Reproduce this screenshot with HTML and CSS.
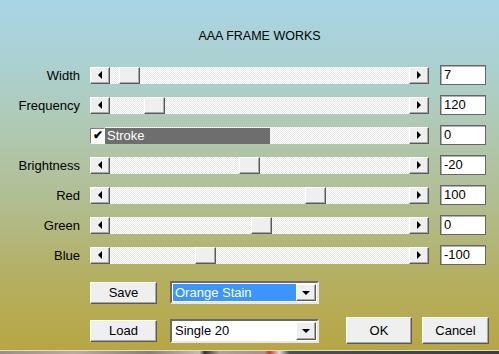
FILE: index.html
```html
<!DOCTYPE html>
<html>
<head>
	<title>AAA Frame Works</title>
	<meta charset="utf-8">
	<link rel="stylesheet" href="styles.css">
</head>
<body>
	<div class="dialog">
		<div class="title">AAA FRAME WORKS</div>

		<div class="rows">
			<div class="label">Width</div>
			<div class="scroll">
				<div class="btn arrow"><span class="tri-left"></span></div>
				<div class="track"><div class="btn thumb" style="left:9px"></div></div>
				<div class="btn arrow"><span class="tri-right"></span></div>
			</div>
			<div class="value">7</div>

			<div class="label">Frequency</div>
			<div class="scroll">
				<div class="btn arrow"><span class="tri-left"></span></div>
				<div class="track"><div class="btn thumb" style="left:34px"></div></div>
				<div class="btn arrow"><span class="tri-right"></span></div>
			</div>
			<div class="value">120</div>

			<div class="label"></div>
			<div class="scroll">
				<div class="check">&#10004;</div>
				<div class="track stroke-track"><div class="stroke-bar">Stroke</div></div>
				<div class="btn arrow"><span class="tri-right"></span></div>
			</div>
			<div class="value">0</div>

			<div class="label">Brightness</div>
			<div class="scroll">
				<div class="btn arrow"><span class="tri-left"></span></div>
				<div class="track"><div class="btn thumb" style="left:129px"></div></div>
				<div class="btn arrow"><span class="tri-right"></span></div>
			</div>
			<div class="value">-20</div>

			<div class="label">Red</div>
			<div class="scroll">
				<div class="btn arrow"><span class="tri-left"></span></div>
				<div class="track"><div class="btn thumb" style="left:195px"></div></div>
				<div class="btn arrow"><span class="tri-right"></span></div>
			</div>
			<div class="value">100</div>

			<div class="label">Green</div>
			<div class="scroll">
				<div class="btn arrow"><span class="tri-left"></span></div>
				<div class="track"><div class="btn thumb" style="left:141px"></div></div>
				<div class="btn arrow"><span class="tri-right"></span></div>
			</div>
			<div class="value">0</div>

			<div class="label">Blue</div>
			<div class="scroll">
				<div class="btn arrow"><span class="tri-left"></span></div>
				<div class="track"><div class="btn thumb" style="left:85px"></div></div>
				<div class="btn arrow"><span class="tri-right"></span></div>
			</div>
			<div class="value">-100</div>
		</div>

		<div class="bottom">
			<div class="btn push small">Save</div>
			<div class="combo">
				<div class="combo-text selected">Orange Stain</div>
				<div class="btn combo-arrow"><span class="tri-down"></span></div>
			</div>
			<div></div>

			<div class="btn push small">Load</div>
			<div class="combo tall">
				<div class="combo-text">Single 20</div>
				<div class="btn combo-arrow"><span class="tri-down"></span></div>
			</div>
			<div class="actions">
				<div class="btn push ok">OK</div>
				<div class="btn push cancel">Cancel</div>
			</div>
		</div>
	</div>
	<div class="strip"></div>
</body>
</html>
```

FILE: styles.css
```css
*,*::after,*::before{
	box-sizing: border-box;
	margin: 0;
	padding: 0;
}

body{
	width: 499px;
	height: 354px;
	overflow: hidden;
	font-family: 'Liberation Sans', Arial, sans-serif;
	font-size: 13px;
	color: black;
}

.dialog{
	height: 350px;
	background: linear-gradient(to bottom, #a8d5e4 0%, #acd0cf 20%, #b0c8b0 38%, #b1bd90 58%, #b4b064 78%, #b8a644 100%);
	display: flex;
	flex-direction: column;
}

.title{
	padding: 29px 0 0 20px;
	line-height: 15px;
	text-align: center;
	font-size: 12.5px;
}

.rows{
	margin-top: 21px;
	display: grid;
	grid-template-columns: 80px 339px 47px;
	grid-auto-rows: 20px;
	column-gap: 10px;
	row-gap: 10px;
	align-items: center;
}

.label{
	text-align: right;
}

.scroll{
	display: flex;
	height: 17px;
}

.btn{
	background-color: #efefef;
	border: 1px solid;
	border-color: #ffffff #5a5a5a #5a5a5a #ffffff;
	box-shadow: inset -1px -1px 0 #a8a8a8;
}

.arrow{
	width: 20px;
	height: 17px;
	display: flex;
	justify-content: center;
	align-items: center;
}

.tri-left,.tri-right,.tri-down{
	width: 0;
	height: 0;
	border: 4px solid transparent;
}

.tri-left{
	border-left-width: 0;
	border-right-color: black;
}

.tri-right{
	border-right-width: 0;
	border-left-color: black;
}

.tri-down{
	border-bottom-width: 0;
	border-top-color: black;
}

.track{
	flex: 1;
	position: relative;
	background-color: #f6f6f6;
	background-image: repeating-conic-gradient(#ffffff 0 25%, #e6e6e6 0 50%);
	background-size: 2px 2px;
}

.thumb{
	position: absolute;
	top: 0;
	width: 21px;
	height: 17px;
}

.check{
	width: 15px;
	height: 16px;
	margin-top: 1px;
	background-color: white;
	border: 1px solid;
	border-color: #808080 #ffffff #ffffff #808080;
	font-size: 12px;
	font-weight: bold;
	line-height: 13px;
	text-align: center;
}

.stroke-track{
	padding-top: 1px;
}

.stroke-bar{
	width: 165px;
	height: 16px;
	background-color: #6e6e6e;
	color: white;
	padding-left: 2px;
	line-height: 15px;
}

.value{
	height: 20px;
	margin-left: 1px;
	background-color: white;
	border: 1px solid #666666;
	box-shadow: inset 1px 1px 0 #b0b0b0;
	padding-left: 3px;
	line-height: 18px;
}

.bottom{
	margin-top: 16px;
	padding-left: 90px;
	display: grid;
	grid-template-columns: 67px 149px 1fr;
	grid-template-rows: 23px 27px;
	column-gap: 13px;
	row-gap: 13px;
	align-items: center;
}

.actions{
	display: flex;
	justify-content: flex-end;
	gap: 10px;
	padding-right: 10px;
}

.push{
	display: flex;
	justify-content: center;
	align-items: center;
}

.small{
	height: 22px;
}

.ok{
	width: 66px;
	height: 27px;
}

.cancel{
	width: 67px;
	height: 27px;
}

.combo{
	height: 23px;
	display: flex;
	background-color: white;
	border: 2px solid;
	border-color: #6a6a6a #e8e8e8 #e8e8e8 #6a6a6a;
	padding: 1px;
}

.combo.tall{
	height: 24px;
}

.combo-text{
	flex: 1;
	line-height: 17px;
	padding-left: 2px;
}

.selected{
	background-color: #3c94ff;
	color: white;
}

.combo-arrow{
	width: 20px;
	display: flex;
	justify-content: center;
	align-items: center;
}

.strip{
	height: 4px;
	border-top: 1px solid #dcdcdc;
	background: linear-gradient(to right, #9a8f88 0%, #b8aca4 15%, #8a7f78 30%, #c8bcb0 40%, #3a3030 41%, #b0a098 44%, #a89890 50%, #b09088 53%, #c04030 54%, #e0d8d8 56%, #505050 58%, #3c3c3c 100%);
}
```
